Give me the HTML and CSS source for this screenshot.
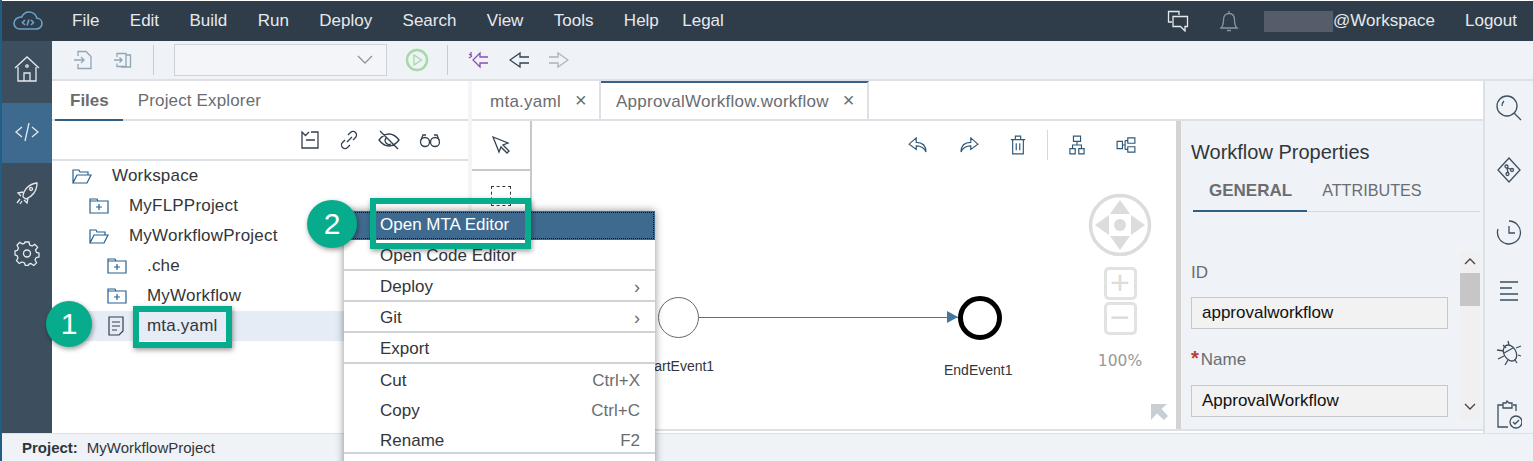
FILE: index.html

```html
<!DOCTYPE html>
<html lang="en">
<head>
    <meta charset="UTF-8">
    <title>SAP Web IDE - Workflow</title>
    <link rel="stylesheet" href="styles.css">
</head>
<body>

<div class="app">
    <header class="topbar">
        <svg class="logo" width="32" height="22" viewBox="0 0 32 22"><path d="M8 19h16c3.500 0 6-2.500 6-5.500 0-3-2.300-5.200-5-5.200C24 4.500 20.500 2 17 2c-3.500 0-6 2-7.200 5C5.500 6.800 2 9.500 2 13.500 2 16.800 4.800 19 8 19z"/><path d="M13 10l-2.500 2.500L13 15M19 10l2.500 2.500L19 15M17 9.500l-2 6"/></svg>
        <nav class="menu-bar">
            <span>File</span><span>Edit</span><span>Build</span><span>Run</span><span>Deploy</span><span>Search</span><span>View</span><span>Tools</span><span>Help</span><span>Legal</span>
        </nav>
        <div class="top-right">
            <svg class="ico chat" width="22" height="22" viewBox="0 0 22 22"><path d="M12 5V1.500H1.500V12H5"/><path d="M6 6.500h14.500V16.500H18V21l-4.500-4.500H6z"/></svg>
            <svg class="ico bell" width="20" height="24" viewBox="0 0 20 24"><path d="M2 19c2-2 2.500-4 2.500-8 0-4 2-6.500 5.500-6.500s5.500 2.500 5.500 6.500c0 4 .5 6 2.500 8zM10 4.500V2M8 21.500h4"/></svg>
            <div class="user"><span class="blur"></span><span>@Workspace</span></div>
            <span class="logout">Logout</span>
        </div>
    </header>

    <div class="body">
        <aside class="siderail">
            <div class="side-btn"><svg class="ico" width="26" height="28" viewBox="0 0 26 28"><path d="M1 13L13 2l12 11M4 12v14h18V12M10 26v-8h6v8"/><circle cx="13" cy="11" r="1.200"/></svg></div>
            <div class="side-btn active"><svg class="ico" width="26" height="24" viewBox="0 0 26 24"><path d="M8 7l-6 5 6 5M18 7l6 5-6 5M15 3l-4 18"/></svg></div>
            <div class="side-btn short"><svg class="ico" width="24" height="24" viewBox="0 0 24 24"><path d="M8 16C8 9 14 3 22 2c0 8-5 14-11 16zM8 11l-5 1 3 3M13 17l-1 5-3-3M5 18l-3 4M7 20l-2 3M16 6.500a1.500 1.500 0 1 0 .1 0"/></svg></div>
            <div class="side-btn short"><svg class="ico" width="26" height="26" viewBox="0 0 26 26"><path d="M11 2h4l.7 3 2.400 1 2.700-1.600 2.800 2.800L21.500 10l1 2.400 2.500.6v4l-3 .7-1 2.300 1.600 2.700-2.800 2.800L17 23.500l-2 .5-.7 1.500h-3L10.500 23 8 22l-2.700 1.500-2.800-2.800L4 18l-1-2.400-2-.6v-4l2.500-.7 1-2.300L3 5.200l2.800-2.800L8.500 4l2-.8z"/><circle cx="13" cy="13.500" r="3.500"/></svg></div>
        </aside>

        <div class="workarea">
            <div class="toolbar">
                <svg class="ico muted t-first" width="20" height="20" viewBox="0 0 20 20"><path d="M5 6V1.500h8l5 5v12H5V14M1 10h10M8 7l3 3-3 3"/></svg>
                <svg class="ico muted" width="20" height="20" viewBox="0 0 20 20"><path d="M4 7V3.500h9v13H4v-3M13 5h4.500v12H8M1 10h8M6.500 7.500L9 10l-2.500 2.500"/></svg>
                <span class="tb-sep"></span>
                <div class="dropdown"><svg class="ico chev" width="16" height="10" viewBox="0 0 16 10"><path d="M1 1l7 7 7-7"/></svg></div>
                <svg class="run" width="24" height="24" viewBox="0 0 24 24"><circle cx="12" cy="12" r="10"/><path d="M9 7l7.500 5L9 17zM9 10v4" stroke-width="1.300"/></svg>
                <span class="tb-sep second"></span>
                <svg class="ico purple" width="20" height="18" viewBox="0 0 20 18"><path d="M20 6h-8V2L5 9l7 7v-4h8M1 3l3 2M1 7l3-2M3 1v4"/></svg>
                <svg class="ico dark" width="20" height="18" viewBox="0 0 20 18"><path d="M20 6h-9V2L1 9l10 7v-4h9"/></svg>
                <svg class="ico faded" width="20" height="18" viewBox="0 0 20 18"><path d="M0 6h9V2l10 7-10 7v-4H0"/></svg>
            </div>

            <div class="panes">
                <section class="files">
                    <div class="files-tabs">
                        <span class="files-tab on">Files</span>
                        <span class="files-tab">Project Explorer</span>
                    </div>
                    <div class="files-actions">
                        <svg class="ico dark" width="20" height="20" viewBox="0 0 20 20"><path d="M11 2h7v16H2V2l3.500 3.500L9 2M6 10h9"/></svg>
                        <svg class="ico dark" width="20" height="20" viewBox="0 0 20 20"><path d="M8 12l5-5M9 5l2.500-2.500a3.500 3.500 0 0 1 5 5L14 10M11 15l-2.500 2.500a3.500 3.500 0 0 1-5-5L6 10"/></svg>
                        <svg class="ico dark" width="22" height="20" viewBox="0 0 22 20"><path d="M1 10c3-4 6-6 10-6s7 2 10 6c-3 4-6 6-10 6s-7-2-10-6zM2 1l18 18M8 8a4 4 0 0 0 5 6"/></svg>
                        <svg class="ico dark" width="22" height="20" viewBox="0 0 22 20"><circle cx="6" cy="12" r="4.500"/><circle cx="16" cy="12" r="4.500"/><path d="M10.500 11h1M2 10l2-5h3M20 10l-2-5h-3"/></svg>
                    </div>
                    <ul class="tree">
                        <li class="row lvl0"><svg class="folder" width="20" height="16" viewBox="0 0 20 16"><path d="M1 15V2h6l1 2h8v3M1 15h14l4-8H5z"/></svg><span>Workspace</span></li>
                        <li class="row lvl1"><svg class="folder" width="20" height="16" viewBox="0 0 20 16"><path d="M1 15V3h18v12zM1 3V1h7l1 2M10 6v6M7 9h6"/></svg><span>MyFLPProject</span></li>
                        <li class="row lvl1"><svg class="folder" width="20" height="16" viewBox="0 0 20 16"><path d="M1 15V2h6l1 2h8v3M1 15h14l4-8H5z"/></svg><span>MyWorkflowProject</span></li>
                        <li class="row lvl2"><svg class="folder" width="20" height="16" viewBox="0 0 20 16"><path d="M1 15V3h18v12zM1 3V1h7l1 2M10 6v6M7 9h6"/></svg><span>.che</span></li>
                        <li class="row lvl2"><svg class="folder" width="20" height="16" viewBox="0 0 20 16"><path d="M1 15V3h18v12zM1 3V1h7l1 2M10 6v6M7 9h6"/></svg><span>MyWorkflow</span></li>
                        <li class="row lvl2 picked"><svg class="doc" width="18" height="20" viewBox="0 0 18 20"><path d="M2 1h14v14l-4 4H2zM5 6h8M5 10h8M5 14h5"/></svg><span>mta.yaml</span></li>
                    </ul>
                </section>

                <div class="sash"></div>

                <section class="editor">
                    <div class="editor-tabs">
                        <div class="ed-tab first">mta.yaml<span class="close">×</span></div>
                        <div class="ed-tab current">ApprovalWorkflow.workflow<span class="close">×</span></div>
                    </div>
                    <div class="editor-body">
                        <div class="palette">
                            <div class="pal-cell"><svg class="ico dark" width="20" height="20" viewBox="0 0 20 20"><path d="M2 2l15 6-5 2 6 6-2 2-6-6-2 5z"/></svg></div>
                            <div class="pal-cell"><span class="marquee"></span></div>
                        </div>
                        <div class="canvas">
                            <div class="canvas-tools">
                                <svg class="ico steel" width="20" height="16" viewBox="0 0 22 18"><path d="M9 1L1 8l8 6v-4c5 0 9 2 11 7 0-7-4-11-11-11z"/></svg>
                                <svg class="ico steel" width="20" height="16" viewBox="0 0 22 18"><path d="M13 1l8 7-8 6v-4c-5 0-9 2-11 7 0-7 4-11 11-11z"/></svg>
                                <svg class="ico steel" width="16" height="20" viewBox="0 0 18 22"><path d="M1 5h16M6 5V1h6v4M3 5v16h12V5M7 9v8M11 9v8"/></svg>
                                <span class="ct-sep"></span>
                                <svg class="ico steel" width="16" height="20" viewBox="0 0 18 22"><path d="M5 1h8v6H5zM1 15h6v6H1zM11 15h6v6h-6zM9 7v4M4 15v-4h10v4"/></svg>
                                <svg class="ico steel" width="20" height="16" viewBox="0 0 22 18"><path d="M1 5h6v8H1zM13 1h8v6h-8zM13 11h8v6h-8zM7 9h3M10 4v10M10 4h3M10 14h3"/></svg>
                            </div>

                            <div class="node start"></div>
                            <span class="node-label start-label">StartEvent1</span>
                            <div class="flow"></div>
                            <div class="node end"></div>
                            <span class="node-label end-label">EndEvent1</span>

                            <div class="navigator">
                                <svg width="64" height="64" viewBox="0 0 64 64"><circle cx="32" cy="32" r="29.500" fill="none" stroke="#dcdcdc" stroke-width="3.500"/><circle cx="32" cy="32" r="6" fill="#dcdcdc"/><path d="M32 7l10 14H22zM32 57l10-14H22zM7 32l14-10v20zM57 32l-14-10v20z" fill="#dcdcdc"/></svg>
                                <div class="zoom-btn">+</div>
                                <div class="zoom-btn">−</div>
                                <div class="zoom-val">100%</div>
                            </div>
                            <svg class="expand" width="20" height="20" viewBox="0 0 20 20"><path d="M2 2h16l-5.500 5L19 14l-4 4-7-6.500L2 18z" fill="#c9ced3"/></svg>
                        </div>
                        <div class="props-sash"></div>
                        <div class="props">
                            <h3>Workflow Properties</h3>
                            <div class="props-tabs"><span class="on">GENERAL</span><span>ATTRIBUTES</span></div>
                            <div class="props-scroll">
                                <div class="form">
                                    <label>ID</label>
                                    <div class="field">approvalworkflow</div>
                                    <label class="second"><b>*</b>Name</label>
                                    <div class="field">ApprovalWorkflow</div>
                                </div>
                                <div class="scrollbar"><svg class="ico" width="14" height="10" viewBox="0 0 14 10"><path d="M2 7l5-5 5 5"/></svg><span class="thumb"></span><svg class="ico low" width="14" height="10" viewBox="0 0 14 10"><path d="M2 3l5 5 5-5"/></svg></div>
                            </div>
                        </div>
                    </div>
                </section>

                <aside class="rightrail">
                    <svg class="ico" width="28" height="28" viewBox="0 0 28 28"><circle cx="12" cy="12" r="10"/><path d="M19 19l7 7M7 12c0-2 1-4 2-5"/></svg>
                    <svg class="ico" width="26" height="28" viewBox="0 0 26 28"><path d="M13 2l11 12-11 12L2 14z"/><circle cx="10.500" cy="10.500" r="1.500"/><circle cx="16" cy="14" r="1.500"/><circle cx="11.500" cy="18" r="1.500"/><path d="M11 12l1 4.500M12 12l3 1.500"/></svg>
                    <svg class="ico" width="26" height="26" viewBox="0 0 26 26"><path d="M13 2a11.500 11.500 0 1 1-11 8M13 7v7h6"/></svg>
                    <svg class="ico" width="24" height="24" viewBox="0 0 24 24"><path d="M3 3h18M3 9h12M3 15h18M3 21h18"/></svg>
                    <svg class="ico" width="26" height="28" viewBox="0 0 26 28"><ellipse cx="14" cy="15" rx="6" ry="8.500" transform="rotate(-30 14 15)"/><path d="M7 7l3 3M12 3l1 4M8 15l9-5M1 12l7 1M2 21l6-3M9 27l3-5M25 8l-5 2M25 18l-3-1M21 25l-2-3"/></svg>
                    <svg class="ico" width="26" height="30" viewBox="0 0 26 30"><path d="M7 5H2v22h10M17 5h3v6M7 8V3h3l1-2 2 2h3v5zM14 22a6 6 0 1 0 12 0 6 6 0 1 0-12 0M17 22l2 2 4-4"/></svg>
                </aside>
            </div>
        </div>
    </div>

    <footer class="status"><b>Project:</b><span>MyWorkflowProject</span></footer>

    <!-- context menu sits over the tree and the canvas -->
    <div class="context">
        <div class="c-item hot">Open MTA Editor</div>
        <div class="c-item line">Open Code Editor</div>
        <div class="c-item line">Deploy<i class="arrow">›</i></div>
        <div class="c-item line">Git<i class="arrow">›</i></div>
        <div class="c-item line">Export</div>
        <div class="c-item tight">Cut<i>Ctrl+X</i></div>
        <div class="c-item tight">Copy<i>Ctrl+C</i></div>
        <div class="c-item tight line">Rename<i>F2</i></div>
    </div>

    <!-- tutorial markers -->
    <div class="mark-box box-one"></div>
    <div class="mark-box box-two"></div>
    <div class="step step-one">1</div>
    <div class="step step-two">2</div>
</div>

</body>
</html>
```

FILE: styles.css

```css
/* Styling the page */
* {
    box-sizing: border-box;
}

body {
    margin: 0;
    font-family: "Liberation Sans", Arial, sans-serif;
    font-size: 17px;
    color: #32363a;
    background: #fff;
}

.app {
    position: relative;
    width: 1533px;
    height: 461px;
    overflow: hidden;
    padding-top: 1px;
    padding-left: 2px;
    background: linear-gradient(#1f5f85, #1f5f85) left / 2px 100% no-repeat #fff;
}

.ico {
    fill: none;
    stroke: currentColor;
    stroke-width: 1.3;
    flex: none;
}

.muted { color: #8fa6b8; }
.purple { color: #8a4fb0; }
.dark { color: #32404f; }
.faded { color: #a9b4bf; }
.steel { color: #2c5878; }

/* top bar */
.topbar {
    height: 40px;
    background: #2f3c4a;
    color: #e6e9ec;
    display: flex;
    align-items: center;
    padding-left: 10px;
}

.logo {
    fill: none;
    stroke: #6ba3cc;
    stroke-width: 1.6;
}

.menu-bar {
    display: flex;
    gap: 30.400px;
    margin-left: 28px;
}

.menu-bar span:last-child {
    margin-left: -7px;
}

.top-right {
    margin-left: auto;
    display: flex;
    align-items: center;
    padding-right: 16px;
}

.chat { color: #e6e9ec; }
.bell { color: #8b95a0; margin-left: 30px; }

.user {
    display: flex;
    align-items: center;
    margin-left: 25px;
}

.blur {
    display: block;
    width: 69px;
    height: 21px;
    background: #545d69;
}

.logout {
    margin-left: 30px;
}

/* main area */
.body {
    display: flex;
    height: 392px;
}

.siderail {
    width: 50px;
    background: #3d4f5f;
    color: #e6e9ec;
}

.side-btn {
    height: 60px;
    display: flex;
    align-items: center;
    justify-content: center;
}

.side-btn:first-child {
    height: 62px;
    padding-bottom: 6px;
}

.side-btn.active {
    background: #3e6a8f;
    padding-bottom: 2px;
}

.workarea {
    flex: 1;
    min-width: 0;
    display: flex;
    flex-direction: column;
}

.toolbar {
    height: 40px;
    background: #eff2f7;
    border-bottom: 2px solid #dde1e6;
    display: flex;
    align-items: center;
    padding-left: 21px;
}

.toolbar svg + svg.muted {
    margin-left: 20px;
}

.tb-sep {
    width: 1px;
    height: 30px;
    background: #c6ccd3;
    margin: 0 20px 0 20px;
}

.tb-sep.second {
    margin: 0 20px 0 18px;
}

.dropdown {
    width: 213px;
    height: 32px;
    background: #f3f5f9;
    border: 1px solid #ccd2d9;
    display: flex;
    align-items: center;
    justify-content: flex-end;
    padding-right: 13px;
}

.chev { color: #8b96a1; }

.run {
    margin-left: 18px;
    fill: none;
    stroke: #a4dba4;
    stroke-width: 2.4;
}

.toolbar .purple + .dark { margin-left: 21px; }
.toolbar .dark + .faded { margin-left: 20px; }

.panes {
    flex: 1;
    display: flex;
    min-height: 0;
}

/* files panel */
.files {
    width: 416px;
    display: flex;
    flex-direction: column;
    background: #fff;
}

.files-tabs {
    height: 40px;
    border-bottom: 2px solid #dde1e6;
    display: flex;
    padding-left: 3px;
}

.files-tab {
    color: #6a6d70;
    padding: 10px 0 0;
    margin-left: 15px;
    height: 40px;
    letter-spacing: 0.15px;
}

.files-tab.on {
    font-weight: bold;
    padding: 10px 14px 0 15px;
    margin-left: 0;
    border-bottom: 2px solid #2f5f85;
    letter-spacing: 0;
}

.files-actions {
    height: 40px;
    border-bottom: 2px solid #dde1e6;
    display: flex;
    align-items: center;
    justify-content: flex-end;
    gap: 19px;
    padding-right: 27px;
}

.tree {
    list-style: none;
    margin: 0;
    padding: 0;
}

.row {
    height: 30px;
    display: flex;
    align-items: center;
    letter-spacing: 0.2px;
}

.row svg {
    margin-right: 20px;
    flex: none;
}

.lvl0 { padding-left: 20px; }
.lvl1 { padding-left: 37px; }
.lvl2 { padding-left: 55px; }

.folder {
    fill: none;
    stroke: #24608f;
    stroke-width: 1.2;
}

.doc {
    fill: none;
    stroke: #32404f;
    stroke-width: 1.2;
    margin-right: 22px !important;
}

.picked {
    background: #e5ecf5;
}

.sash {
    width: 4px;
    background: #f4f5f7;
}

/* editor */
.editor {
    width: 1011px;
    display: flex;
    flex-direction: column;
    background: #fff;
}

.editor-tabs {
    height: 40px;
    flex: none;
    display: flex;
    border-bottom: 2px solid #dde1e6;
}

.ed-tab {
    height: 40px;
    color: #6a6d70;
    padding-top: 11px;
    white-space: nowrap;
    border-right: 2px solid #dde1e6;
    letter-spacing: 0.25px;
}

.ed-tab.first {
    width: 129px;
    padding-left: 18px;
}

.ed-tab.current {
    width: 268px;
    padding-left: 15px;
    padding-top: 9px;
    border-top: 2px solid #3a6288;
}

.close {
    margin-left: 14px;
    font-size: 20px;
    line-height: 17px;
}

.editor-body {
    flex: 1;
    display: flex;
    min-height: 0;
    border-bottom: 2px solid #dde1e6;
    margin-bottom: 2px;
}

.palette {
    width: 60px;
    flex: none;
    border-right: 2px solid #c6c9cc;
    background: #fff;
}

.pal-cell {
    height: 50px;
    border-bottom: 2px solid #c6c9cc;
    display: flex;
    align-items: center;
    justify-content: center;
}

.pal-cell + .pal-cell {
    border-bottom: none;
}

.marquee {
    display: block;
    width: 20px;
    height: 20px;
    border: 1px dashed #32363a;
}

.canvas {
    position: relative;
    width: 644px;
    flex: none;
}

.canvas-tools {
    height: 48px;
    display: flex;
    align-items: center;
    justify-content: flex-end;
    gap: 31px;
    padding-right: 40px;
}

.ct-sep {
    width: 1px;
    height: 30px;
    margin: 0 -10px;
    background: #d5d9dd;
}

.node {
    position: absolute;
    border-radius: 50%;
    background: #fff;
}

.node.start {
    left: 126px;
    top: 176px;
    width: 41px;
    height: 41px;
    border: 1.5px solid #666;
}

.node.end {
    left: 426px;
    top: 175px;
    width: 44px;
    height: 44px;
    border: 5.500px solid #000;
}

.flow {
    position: absolute;
    left: 167px;
    top: 196px;
    width: 259px;
    border-top: 1.5px solid #44779f;
}

.flow::after {
    content: "";
    position: absolute;
    right: 0;
    top: -7px;
    border-left: 11px solid #44779f;
    border-top: 6px solid transparent;
    border-bottom: 6px solid transparent;
}

.node-label {
    position: absolute;
    font-size: 14px;
    color: #32363a;
}

.start-label {
    left: 109px;
    top: 237px;
}

.end-label {
    left: 412px;
    top: 241px;
}

.navigator {
    position: absolute;
    left: 556px;
    top: 72px;
    width: 64px;
    display: flex;
    flex-direction: column;
    align-items: center;
}

.zoom-btn {
    width: 33px;
    height: 33px;
    margin-top: 2px;
    border: 3px solid #e2e2e2;
    border-radius: 5px;
    color: #dcdcdc;
    font-size: 34px;
    line-height: 25px;
    text-align: center;
}

.navigator svg + .zoom-btn {
    margin-top: 10px;
}

.zoom-val {
    margin-top: 17px;
    font-family: "DejaVu Sans", sans-serif;
    font-size: 15.500px;
    color: #999;
}

.expand {
    position: absolute;
    left: 617px;
    top: 281px;
}

.props-sash {
    width: 5px;
    flex: none;
    background: #d3d3d3;
}

.props {
    flex: 1;
    min-width: 0;
    background: #eff2f7;
    padding: 20px 3px 0 10px;
    display: flex;
    flex-direction: column;
}

.props h3 {
    margin: 0;
    font-size: 20px;
    font-weight: normal;
    line-height: 23px;
    color: #32363a;
}

.props-tabs {
    display: flex;
    height: 40px;
    margin-top: 8px;
    margin-left: 2px;
    color: #6a6d70;
    border-bottom: 1px solid #d5dae0;
}

.props-tabs span {
    padding: 9px 15px 0 15px;
    font-size: 16.200px;
}

.props-tabs .on {
    font-size: 17px;
    font-weight: bold;
    padding: 9px 15px 0 16px;
    border-bottom: 2px solid #2f5f85;
    height: 40px;
}

.props-scroll {
    display: flex;
    flex: 1;
    min-height: 0;
    margin-top: 40px;
}

.form {
    width: 269px;
    padding-top: 11px;
}

.form label {
    display: block;
    color: #6a6d70;
    line-height: 20px;
    margin-bottom: 14px;
}

.form label.second {
    margin-top: 21px;
    margin-bottom: 15px;
}

.form label b {
    color: #bb3b3b;
    margin-right: 2px;
    font-size: 20px;
    line-height: 17px;
}

.field {
    width: 257px;
    height: 32px;
    border: 1px solid #c6c9cc;
    background: #f2f2f2;
    color: #111;
    padding: 5px 10px;
}

.scrollbar {
    width: 20px;
    height: 168px;
    background: #f0f0f0;
    color: #444;
    display: flex;
    flex-direction: column;
    align-items: center;
    padding-top: 5px;
}

.thumb {
    display: block;
    width: 20px;
    height: 33px;
    margin-top: 6px;
    background: #c6c6c6;
}

.scrollbar .low {
    margin-top: auto;
    margin-bottom: 9px;
}

.rightrail {
    width: 50px;
    flex: none;
    background: #eff2f7;
    border-left: 2px solid #dde1e6;
    color: #3d4f5f;
    display: flex;
    flex-direction: column;
    align-items: center;
    justify-content: space-between;
    padding: 13px 0 3px;
    overflow: hidden;
}

/* status line */
.status {
    height: 28px;
    background: #eff2f7;
    border-top: 1px solid #dde1e6;
    font-size: 15px;
    display: flex;
    align-items: center;
    padding-left: 20px;
    gap: 9px;
}

/* context menu */
.context {
    position: absolute;
    left: 344px;
    top: 211px;
    width: 311px;
    height: 270px;
    background: #fff;
    box-shadow: 0 0 8px rgba(0, 0, 0, 0.45);
}

.c-item {
    height: 31px;
    padding: 6px 15px 0 36px;
    display: flex;
    justify-content: space-between;
    white-space: nowrap;
}

.c-item.tight {
    height: 30px;
    padding-top: 7px;
}

.c-item.line {
    border-bottom: 2px solid #d0d3d6;
}

.c-item i {
    font-style: normal;
    color: #6a6d70;
}

.c-item i.arrow {
    font-size: 18px;
}

.c-item.hot {
    height: 29px;
    padding-top: 4px;
    background: #3f6a8f;
    color: #fff;
    outline: 1px dotted #111;
    outline-offset: -2px;
}

/* tutorial markers */
.mark-box {
    position: absolute;
    border: 6px solid #07ac8c;
    box-shadow: 1px 2px 5px rgba(0, 0, 0, 0.4);
}

.box-one {
    left: 133px;
    top: 306px;
    width: 99px;
    height: 42px;
}

.box-two {
    left: 370px;
    top: 198px;
    width: 161px;
    height: 51px;
}

.step {
    position: absolute;
    border-radius: 50%;
    background: #07ac8c;
    color: #fff;
    font-size: 30px;
    display: flex;
    align-items: center;
    justify-content: center;
    box-shadow: 1px 2px 5px rgba(0, 0, 0, 0.4);
}

.step-one {
    left: 46px;
    top: 301px;
    width: 46px;
    height: 46px;
}

.step-two {
    left: 307px;
    top: 200px;
    width: 50px;
    height: 48px;
}
```
